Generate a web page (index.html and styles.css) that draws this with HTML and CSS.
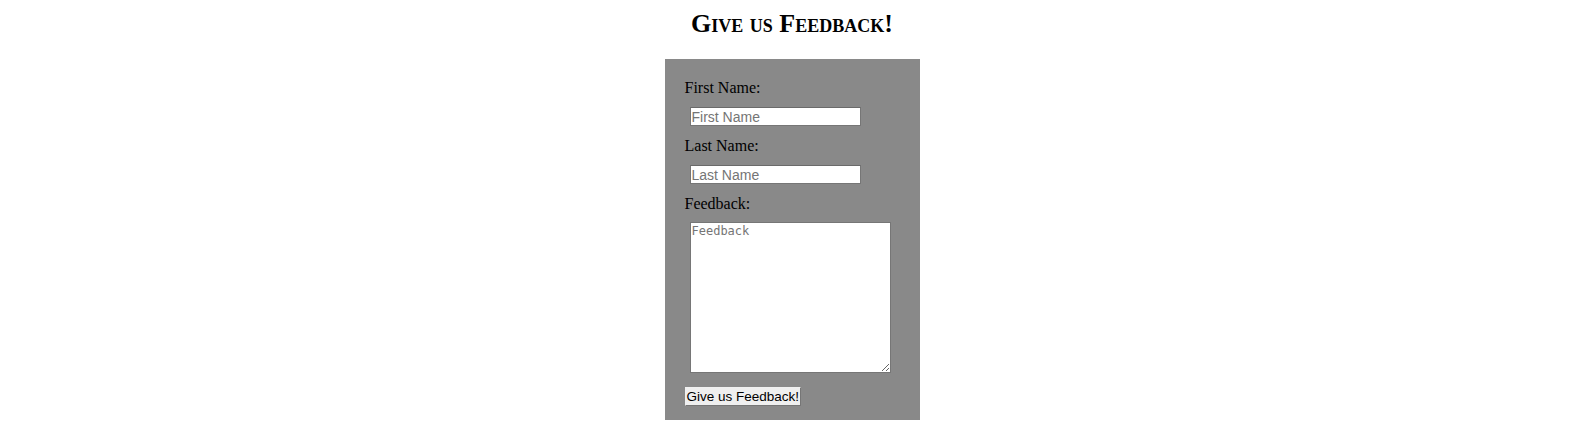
FILE: index.html
```html
<!DOCTYPE html>
<html>
<head>
<meta charset="utf-8">
<title>Feedback</title>
<link rel="stylesheet" href="styles.css">
</head>
<body>
<h1 class="title">Give us Feedback!</h1>
<form class="feedback-form">
  <label class="field-label" for="first">First Name:</label>
  <input class="text-input" id="first" type="text" placeholder="First Name">
  <label class="field-label" for="last">Last Name:</label>
  <input class="text-input" id="last" type="text" placeholder="Last Name">
  <label class="field-label" for="fb">Feedback:</label>
  <textarea class="text-area" id="fb" placeholder="Feedback"></textarea>
  <button class="submit-btn" type="submit">Give us Feedback!</button>
</form>
</body>
</html>
```
FILE: styles.css
```css
html, body {
  margin: 0;
  padding: 0;
  background: #fff;
}
body {
  font-family: "Liberation Serif", "Times New Roman", serif;
  color: #000;
}
.title {
  margin: 9px 0 20px;
  text-align: center;
  font-family: "Liberation Serif", serif;
  font-variant: small-caps;
  font-weight: bold;
  font-size: 26px;
  line-height: 30px;
}
.feedback-form {
  width: 255px;
  box-sizing: border-box;
  margin: 0 auto;
  background: #898989;
  padding: 20px 20px 14px;
  display: flex;
  flex-direction: column;
  align-items: flex-start;
}
.field-label {
  font-size: 16px;
  line-height: 18px;
}
.text-input {
  box-sizing: border-box;
  width: 171px;
  height: 19px;
  margin: 10px 0 11px 5px;
  padding: 0 1px;
  border: 1px solid #767676;
  border-top-color: #6a6a6a;
  font-family: "Liberation Sans", Arial, sans-serif;
  font-size: 14px;
  background: #fff;
}
.text-input::placeholder {
  color: #757575;
}
.text-area {
  box-sizing: border-box;
  width: 201px;
  height: 151px;
  margin: 9px 0 14px 5px;
  padding: 1px;
  border: 1px solid #767676;
  font-family: "DejaVu Sans Mono", monospace;
  font-size: 12px;
  background: #fff;
}
.text-area::placeholder {
  color: #757575;
}
.submit-btn {
  margin: 0;
  height: 19px;
  padding: 0 1px;
  border: 1px solid #767676;
  border-color: #f0f0f0 #767676 #767676 #f0f0f0;
  background: #efefef;
  font-family: "Liberation Sans", Arial, sans-serif;
  font-size: 13.5px;
  color: #000;
  line-height: 15px;
}
```
